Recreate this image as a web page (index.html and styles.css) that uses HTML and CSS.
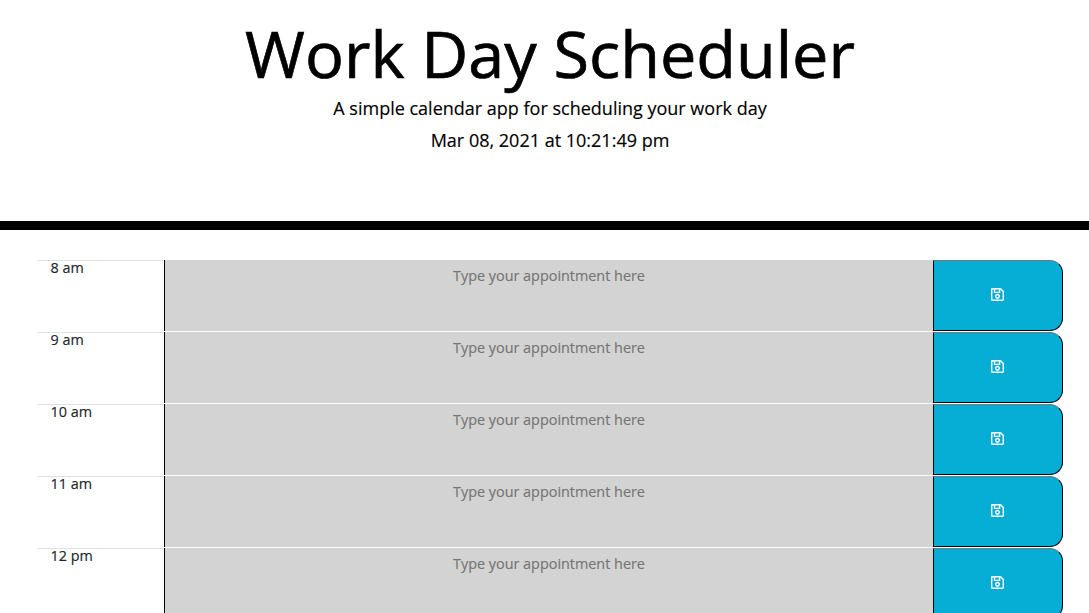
FILE: index.html
```
<!DOCTYPE html>
<html lang="en">
<head>
<meta charset="utf-8">
<title>Work Day Scheduler</title>
<link rel="stylesheet" href="styles.css">
</head>
<body>
<svg class="sprite" aria-hidden="true"><symbol id="save" viewBox="0 32 448 448"><path fill="currentColor" d="M433.941 129.941l-83.882-83.882A48 48 0 0 0 316.118 32H48C21.49 32 0 53.49 0 80v352c0 26.51 21.49 48 48 48h352c26.51 0 48-21.49 48-48V163.882a48 48 0 0 0-14.059-33.941zM272 80v80H144V80h128zm122 352H54a6 6 0 0 1-6-6V86a6 6 0 0 1 6-6h42v104c0 13.255 10.745 24 24 24h176c13.255 0 24-10.745 24-24V83.882l78.243 78.243a6 6 0 0 1 1.757 4.243V426a6 6 0 0 1-6 6zM224 232c-48.523 0-88 39.477-88 88s39.477 88 88 88 88-39.477 88-88-39.477-88-88-88zm0 128c-22.056 0-40-17.944-40-40s17.944-40 40-40 40 17.944 40 40-17.944 40-40 40z"/></symbol></svg>
<header class="header">
  <h1 class="title">Work Day Scheduler</h1>
  <p class="lead">A simple calendar app for scheduling your work day</p>
  <p class="lead">Mar 08, 2021 at 10:21:49 pm</p>
</header>
<main class="schedule">
  <div class="row"><div class="hour">8 am</div><textarea class="entry" placeholder="Type your appointment here"></textarea><button class="save" aria-label="Save"><svg class="icon"><use href="#save"/></svg></button></div>
  <div class="row"><div class="hour">9 am</div><textarea class="entry" placeholder="Type your appointment here"></textarea><button class="save" aria-label="Save"><svg class="icon"><use href="#save"/></svg></button></div>
  <div class="row"><div class="hour">10 am</div><textarea class="entry" placeholder="Type your appointment here"></textarea><button class="save" aria-label="Save"><svg class="icon"><use href="#save"/></svg></button></div>
  <div class="row"><div class="hour">11 am</div><textarea class="entry" placeholder="Type your appointment here"></textarea><button class="save" aria-label="Save"><svg class="icon"><use href="#save"/></svg></button></div>
  <div class="row"><div class="hour">12 pm</div><textarea class="entry" placeholder="Type your appointment here"></textarea><button class="save" aria-label="Save"><svg class="icon"><use href="#save"/></svg></button></div>
</main>
</body>
</html>
```
FILE: styles.css
```
* { box-sizing: border-box; }
html, body { height: 100%; overflow: hidden; }
body { margin: 0; background: #fff; color: #212529; font: 14.4px/16px "Open Sans", sans-serif; -webkit-text-stroke: 0.15px currentColor; }
.sprite { display: none; }
.header { height: 230px; padding: 14px 0 0 11px; border-bottom: 9px solid #000; color: #000; text-align: center; }
.title { margin: 0; font-size: 64.8px; font-weight: 400; line-height: 78px; -webkit-text-stroke: 0.7px #000; }
.lead { margin: 0; font-size: 18px; line-height: 32px; }
.schedule { padding: 30px 26px 0 37px; }
.row { display: grid; grid-template-columns: 127px 769px 130px; height: 71px; margin-bottom: 1px; }
.hour { padding-left: 13.5px; border-top: 1px solid #dee2e6; line-height: 14px; }
.entry { display: block; width: 100%; height: 71px; margin: 0; padding: 8px 0 0; border: 0; border-left: 1px solid #000; border-radius: 0; background: #d3d3d3; color: #000; font: inherit; text-align: center; resize: none; overflow: hidden; }
.entry::placeholder { color: #757575; }
.save { display: flex; align-items: center; justify-content: center; width: 100%; height: 71px; margin: 0; padding: 0 1px 2px 0; border: 1px solid #000; border-top-color: #767676; border-radius: 0 13px 13px 0; background: #06aed5; color: #fff; }
.icon { display: block; width: 13px; height: 13px; }
```
